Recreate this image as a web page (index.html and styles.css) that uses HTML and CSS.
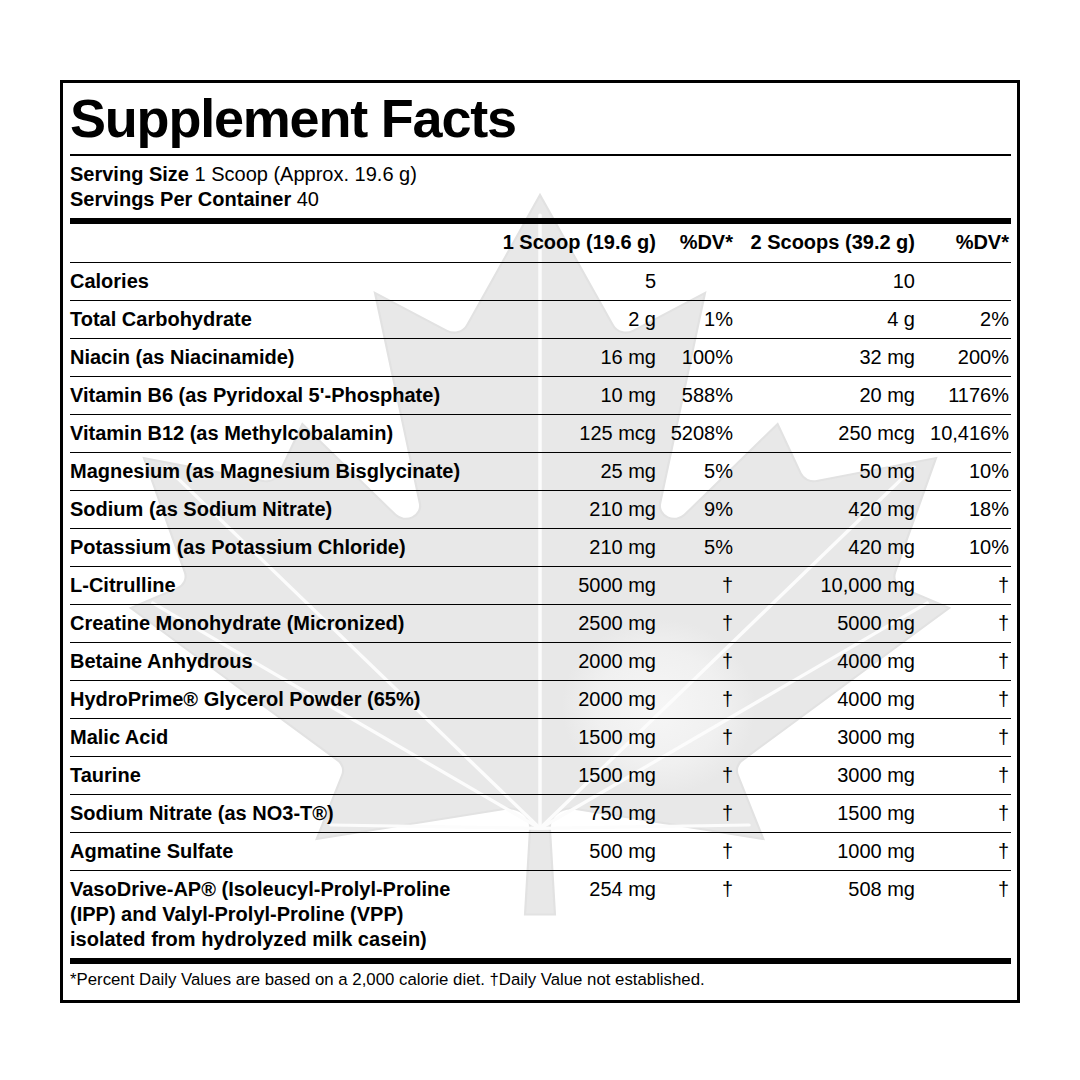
FILE: index.html
```html
<!DOCTYPE html>
<html lang="en">
<head>
<meta charset="utf-8">
<title>Supplement Facts</title>
<link rel="stylesheet" href="styles.css">
</head>
<body>
<div class="label">
  <svg class="leaf" viewBox="63 83 954 917" preserveAspectRatio="none" aria-hidden="true">
    <defs>
      <radialGradient id="lg" cx="540" cy="560" r="440" gradientUnits="userSpaceOnUse">
        <stop offset="0" stop-color="#f6f6f6"/>
        <stop offset="0.65" stop-color="#f0f0f0"/>
        <stop offset="1" stop-color="#e8e8e8"/>
      </radialGradient>
    </defs>
    <g transform="translate(540 595) scale(0.22 0.2)">
      <path fill="url(#lg)" stroke="#e2e2e2" stroke-width="10" d="m-68 1597 23-430a95 95 0 0 0-111-98l-859 151 116-320a65 65 0 0 0-20-73l-941-762 212-99a65 65 0 0 0 34-79l-186-572 542 115a65 65 0 0 0 73-38l105-247 423 454a65 65 0 0 0 111-57l-204-1052 327 189a65 65 0 0 0 91-27l332-652 332 652a65 65 0 0 0 91 27l327-189-204 1052a65 65 0 0 0 111 57l423-454 105 247a65 65 0 0 0 73 38l542-115-186 572a65 65 0 0 0 34 79l212 99-941 762a65 65 0 0 0-20 73l116 320-859-151a95 95 0 0 0-111 98l23 430z"/>
      <g stroke="#fcfcfc" stroke-width="16" fill="none" stroke-linecap="round">
        <path d="M0 1167 L0 -1900"/>
        <path d="M0 1167 L-1700 -640"/>
        <path d="M0 1167 L1700 -640"/>
        <path d="M0 1167 L-1760 40"/>
        <path d="M0 1167 L1760 40"/>
        <path d="M0 1167 L-950 1150"/>
        <path d="M0 1167 L950 1150"/>
      </g>
    </g>
  </svg>

  <h1 class="title">Supplement Facts</h1>
  <div class="rule"></div>
  <div class="serving">
    <div><b>Serving Size</b> 1 Scoop (Approx. 19.6 g)</div>
    <div><b>Servings Per Container</b> 40</div>
  </div>
  <div class="bar"></div>

  <div class="row head">
    <div class="name"></div>
    <div class="num">1 Scoop (19.6 g)</div>
    <div class="num">%DV*</div>
    <div class="num">2 Scoops (39.2 g)</div>
    <div class="num">%DV*</div>
  </div>
  <div class="row"><div class="name">Calories</div><div class="num">5</div><div class="num"></div><div class="num">10</div><div class="num"></div></div>
  <div class="row"><div class="name">Total Carbohydrate</div><div class="num">2 g</div><div class="num">1%</div><div class="num">4 g</div><div class="num">2%</div></div>
  <div class="row"><div class="name">Niacin (as Niacinamide)</div><div class="num">16 mg</div><div class="num">100%</div><div class="num">32 mg</div><div class="num">200%</div></div>
  <div class="row"><div class="name">Vitamin B6 (as Pyridoxal 5'-Phosphate)</div><div class="num">10 mg</div><div class="num">588%</div><div class="num">20 mg</div><div class="num">1176%</div></div>
  <div class="row"><div class="name">Vitamin B12 (as Methylcobalamin)</div><div class="num">125 mcg</div><div class="num">5208%</div><div class="num">250 mcg</div><div class="num">10,416%</div></div>
  <div class="row"><div class="name">Magnesium (as Magnesium Bisglycinate)</div><div class="num">25 mg</div><div class="num">5%</div><div class="num">50 mg</div><div class="num">10%</div></div>
  <div class="row"><div class="name">Sodium (as Sodium Nitrate)</div><div class="num">210 mg</div><div class="num">9%</div><div class="num">420 mg</div><div class="num">18%</div></div>
  <div class="row"><div class="name">Potassium (as Potassium Chloride)</div><div class="num">210 mg</div><div class="num">5%</div><div class="num">420 mg</div><div class="num">10%</div></div>
  <div class="row"><div class="name">L-Citrulline</div><div class="num">5000 mg</div><div class="num">†</div><div class="num">10,000 mg</div><div class="num">†</div></div>
  <div class="row"><div class="name">Creatine Monohydrate (Micronized)</div><div class="num">2500 mg</div><div class="num">†</div><div class="num">5000 mg</div><div class="num">†</div></div>
  <div class="row"><div class="name">Betaine Anhydrous</div><div class="num">2000 mg</div><div class="num">†</div><div class="num">4000 mg</div><div class="num">†</div></div>
  <div class="row"><div class="name">HydroPrime® Glycerol Powder (65%)</div><div class="num">2000 mg</div><div class="num">†</div><div class="num">4000 mg</div><div class="num">†</div></div>
  <div class="row"><div class="name">Malic Acid</div><div class="num">1500 mg</div><div class="num">†</div><div class="num">3000 mg</div><div class="num">†</div></div>
  <div class="row"><div class="name">Taurine</div><div class="num">1500 mg</div><div class="num">†</div><div class="num">3000 mg</div><div class="num">†</div></div>
  <div class="row"><div class="name">Sodium Nitrate (as NO3-T®)</div><div class="num">750 mg</div><div class="num">†</div><div class="num">1500 mg</div><div class="num">†</div></div>
  <div class="row"><div class="name">Agmatine Sulfate</div><div class="num">500 mg</div><div class="num">†</div><div class="num">1000 mg</div><div class="num">†</div></div>
  <div class="row last"><div class="name">VasoDrive-AP® (Isoleucyl-Prolyl-Proline<br>(IPP) and Valyl-Prolyl-Proline (VPP)<br>isolated from hydrolyzed milk casein)</div><div class="num">254 mg</div><div class="num">†</div><div class="num">508 mg</div><div class="num">†</div></div>

  <div class="bar bottom"></div>
  <p class="note">*Percent Daily Values are based on a 2,000 calorie diet. †Daily Value not established.</p>
</div>
</body>
</html>
```

FILE: styles.css
```css
html, body {
  margin: 0;
  padding: 0;
  background: #ffffff;
}

body {
  font-family: "Liberation Sans", Arial, Helvetica, sans-serif;
  color: #000000;
}

.label {
  position: relative;
  z-index: 0;
  box-sizing: border-box;
  width: 960px;
  margin: 80px 0 0 60px;
  border: 3px solid #000000;
  padding: 8px 6px 10px 7px;
  background: #ffffff;
}

.leaf {
  position: absolute;
  left: 0;
  top: 0;
  width: 100%;
  height: 100%;
  z-index: -1;
}

.title {
  margin: 0;
  font-size: 54px;
  line-height: 54px;
  font-weight: bold;
  letter-spacing: -1.2px;
}

.rule {
  margin-top: 9px;
  height: 2px;
  background: #000000;
}

.serving {
  margin-top: 6px;
  font-size: 20px;
  line-height: 25px;
}

.bar {
  margin-top: 6px;
  height: 6px;
  background: #000000;
}

.bar.bottom {
  margin-top: 0;
}

.row {
  display: grid;
  grid-template-columns: 1fr 160px 77px 182px 94px;
  font-size: 20px;
  line-height: 25px;
  padding: 6px 0 6px;
  border-bottom: 1px solid #000000;
}

.row.head {
  padding: 6px 0 7px;
  font-weight: bold;
}

.row.last {
  border-bottom: none;
}

.name {
  font-weight: bold;
  white-space: nowrap;
}

.num {
  text-align: right;
  padding-right: 2px;
  white-space: nowrap;
}

.note {
  margin: 6px 0 0;
  font-size: 16.8px;
  line-height: 20px;
}
```
